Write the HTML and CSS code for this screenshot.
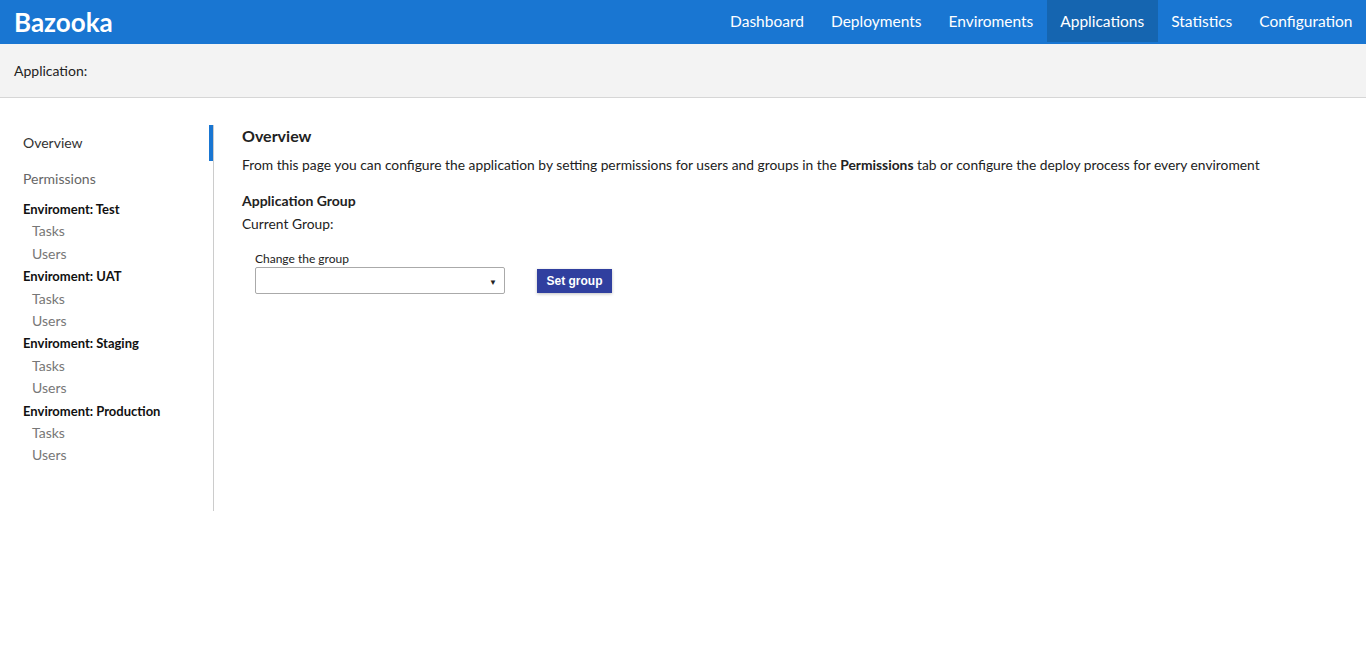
FILE: index.html
```html
<!DOCTYPE html>
<html lang="en">
<head>
    <meta charset="UTF-8">
    <meta name="viewport" content="width=device-width, initial-scale=1.0">
    <title>Bazooka - Application</title>
    <link rel="stylesheet" href="styles.css">
</head>
<body>
    <header class="topbar">
        <div class="brand">Bazooka</div>
        <nav class="mainnav">
            <a href="#">Dashboard</a>
            <a href="#">Deployments</a>
            <a href="#">Enviroments</a>
            <a href="#" class="active">Applications</a>
            <a href="#">Statistics</a>
            <a href="#">Configuration</a>
        </nav>
    </header>

    <div class="crumbs">Application:</div>

    <div class="page">
        <aside class="sidebar">
            <a href="#" class="side-link selected">Overview</a>
            <a href="#" class="side-link muted">Permissions</a>

            <div class="env">Enviroment: Test</div>
            <a href="#" class="sub-link">Tasks</a>
            <a href="#" class="sub-link">Users</a>

            <div class="env">Enviroment: UAT</div>
            <a href="#" class="sub-link">Tasks</a>
            <a href="#" class="sub-link">Users</a>

            <div class="env">Enviroment: Staging</div>
            <a href="#" class="sub-link">Tasks</a>
            <a href="#" class="sub-link">Users</a>

            <div class="env">Enviroment: Production</div>
            <a href="#" class="sub-link">Tasks</a>
            <a href="#" class="sub-link">Users</a>
        </aside>

        <main class="content">
            <h2>Overview</h2>
            <p>From this page you can configure the application by setting permissions for users and groups in the <b>Permissions</b> tab or configure the deploy process for every enviroment</p>

            <h3>Application Group</h3>
            <p class="current">Current Group:</p>

            <div class="group-form">
                <label class="field">
                    <span>Change the group</span>
                    <div class="select">
                        <span class="caret">&#9660;</span>
                    </div>
                </label>
                <button class="btn">Set group</button>
            </div>
        </main>
    </div>
</body>
</html>
```

FILE: styles.css
```css
body {
    margin: 0;
    font-family: Lato, "Open Sans", sans-serif;
    font-size: 14px;
    color: #222;
    background: #fff;
}
a {
    text-decoration: none;
    color: inherit;
}

/* top bar */
.topbar {
    display: flex;
    justify-content: space-between;
    height: 44px;
    background: #1976d2;
    color: #fff;
}
.brand {
    padding-left: 14px;
    font-size: 26px;
    font-weight: bold;
    line-height: 44px;
}
.mainnav {
    display: flex;
    align-items: flex-start;
}
.mainnav a {
    height: 42px;
    line-height: 42px;
    padding: 0 13.5px;
    font-size: 15.5px;
}
.mainnav a.active {
    background: #1565b0;
}

/* breadcrumb strip */
.crumbs {
    height: 53px;
    line-height: 54px;
    padding-left: 14px;
    background: #f3f3f3;
    border-bottom: 1px solid #d6d6d6;
    color: #222;
}

/* page body */
.page {
    display: flex;
    padding-top: 27px;
}
.sidebar {
    display: flex;
    flex-direction: column;
    width: 213px;
    min-height: 386px;
    border-right: 1px solid #ccc;
}
.side-link {
    height: 36px;
    line-height: 36px;
    padding-left: 23px;
    color: #333;
}
.side-link.selected {
    box-shadow: inset -4px 0 0 #1976d2;
}
.side-link.muted {
    margin-bottom: 1px;
    color: #666;
}
.env {
    padding-left: 23px;
    font-size: 13px;
    font-weight: bold;
    line-height: 22.4px;
    color: #111;
}
.sub-link {
    padding-left: 32px;
    line-height: 22.4px;
    color: #777;
}

.content {
    padding-left: 28px;
}
.content h2 {
    margin: 1px 0 0;
    font-size: 16px;
    line-height: 20px;
}
.content p {
    margin: 9px 0 0;
    font-size: 13.8px;
    line-height: 20px;
}
.content h3 {
    margin: 16px 0 0;
    font-size: 14px;
    line-height: 20px;
}
.content p.current {
    margin-top: 3px;
}

.group-form {
    display: flex;
    align-items: flex-end;
    gap: 32px;
    margin: 17px 0 0 13px;
}
.field {
    display: flex;
    flex-direction: column;
    font-size: 12px;
}
.field span {
    line-height: 16px;
}
.select {
    position: relative;
    width: 248px;
    height: 25px;
    border: 1px solid #aaa;
    border-radius: 2px;
}
.select .caret {
    position: absolute;
    right: 7px;
    top: 6px;
    font-size: 8px;
    color: #222;
}
.btn {
    height: 24px;
    width: 75px;
    margin-bottom: 1px;
    border: none;
    background: #303f9f;
    color: #fff;
    font-family: "Liberation Sans", Arial, sans-serif;
    font-size: 12px;
    font-weight: bold;
    box-shadow: 0 1px 3px rgba(0, 0, 0, 0.25);
    cursor: pointer;
}
```
